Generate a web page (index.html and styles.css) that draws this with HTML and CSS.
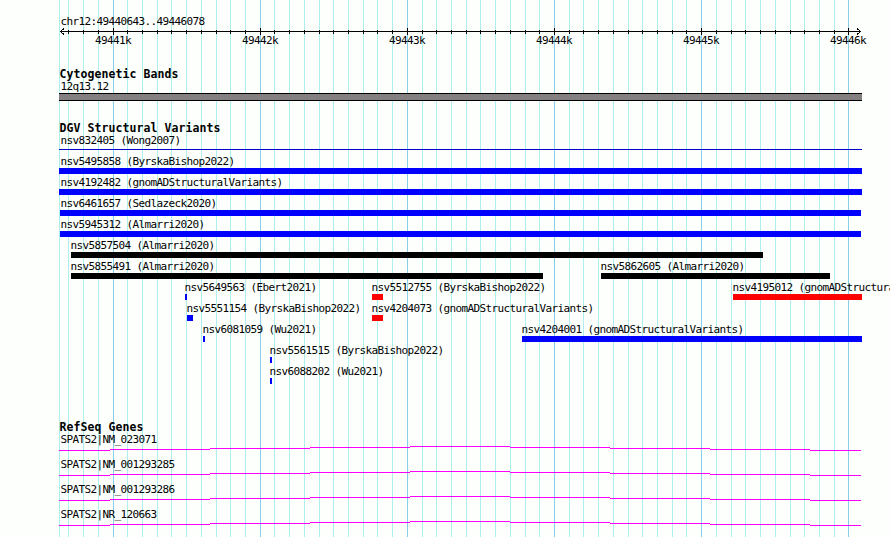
FILE: index.html
```html
<!DOCTYPE html>
<html lang="en">

<head>
    <meta charset="utf-8">
    <title>chr12:49440643..49446078</title>
    <link rel="stylesheet" href="styles.css">
</head>

<body>

    <div class="browser">
        <svg class="grid" width="890" height="537">
            <path class="minor" d="M59.5 0v537M68.5 0v537M83.5 0v537M98.5 0v537M127.5 0v537M142.5 0v537M157.5 0v537M171.5 0v537M186.5 0v537M201.5 0v537M216.5 0v537M230.5 0v537M245.5 0v537M274.5 0v537M289.5 0v537M304.5 0v537M319.5 0v537M333.5 0v537M348.5 0v537M363.5 0v537M377.5 0v537M392.5 0v537M422.5 0v537M436.5 0v537M451.5 0v537M466.5 0v537M480.5 0v537M495.5 0v537M510.5 0v537M525.5 0v537M539.5 0v537M569.5 0v537M583.5 0v537M598.5 0v537M613.5 0v537M628.5 0v537M642.5 0v537M657.5 0v537M672.5 0v537M686.5 0v537M716.5 0v537M731.5 0v537M745.5 0v537M760.5 0v537M775.5 0v537M790.5 0v537M804.5 0v537M819.5 0v537M834.5 0v537" />
            <path class="major" d="M113.5 0v537M260.5 0v537M407.5 0v537M554.5 0v537M701.5 0v537M848.5 0v537" />
        </svg>

        <div class="track scale">
            <div class="label">chr12:49440643..49446078</div>
            <svg class="ruler" width="890" height="20">
                <path d="M60 3.5h801M68.5 2v4M83.5 2v4M98.5 2v4M127.5 2v4M142.5 2v4M157.5 2v4M171.5 2v4M186.5 2v4M201.5 2v4M216.5 2v4M230.5 2v4M245.5 2v4M274.5 2v4M289.5 2v4M304.5 2v4M319.5 2v4M333.5 2v4M348.5 2v4M363.5 2v4M377.5 2v4M392.5 2v4M422.5 2v4M436.5 2v4M451.5 2v4M466.5 2v4M480.5 2v4M495.5 2v4M510.5 2v4M525.5 2v4M539.5 2v4M569.5 2v4M583.5 2v4M598.5 2v4M613.5 2v4M628.5 2v4M642.5 2v4M657.5 2v4M672.5 2v4M686.5 2v4M716.5 2v4M731.5 2v4M745.5 2v4M760.5 2v4M775.5 2v4M790.5 2v4M804.5 2v4M819.5 2v4M834.5 2v4" />
                <path d="M113.5 0v7M260.5 0v7M407.5 0v7M554.5 0v7M701.5 0v7M848.5 0v7" />
                <path d="M64 .5L60.5 3.5L64 6.5M857 .5L860.5 3.5L857 6.5" />
                <text x="95" y="16">49441k</text>
                <text x="242" y="16">49442k</text>
                <text x="389" y="16">49443k</text>
                <text x="536" y="16">49444k</text>
                <text x="683" y="16">49445k</text>
                <text x="830" y="16">49446k</text>
            </svg>
        </div>

        <div class="track cyto">
            <h2>Cytogenetic Bands</h2>
            <div class="label">12q13.12</div>
            <div class="band"></div>
        </div>

        <div class="track variants">
            <h2>DGV Structural Variants</h2>
            <div class="row">
                <div class="variant thin edge" style="--gap:59px;--len:803px"><span>nsv832405 (Wong2007)</span></div>
            </div>
            <div class="row">
                <div class="variant gain edge" style="--gap:59px;--len:803px"><span>nsv5495858 (ByrskaBishop2022)</span></div>
            </div>
            <div class="row">
                <div class="variant gain edge" style="--gap:59px;--len:803px"><span>nsv4192482 (gnomADStructuralVariants)</span></div>
            </div>
            <div class="row">
                <div class="variant gain inner" style="--gap:60px;--len:801px"><span>nsv6461657 (Sedlazeck2020)</span></div>
            </div>
            <div class="row">
                <div class="variant gain inner" style="--gap:60px;--len:801px"><span>nsv5945312 (Almarri2020)</span></div>
            </div>
            <div class="row">
                <div class="variant other" style="--gap:71px;--len:692px"><span>nsv5857504 (Almarri2020)</span></div>
            </div>
            <div class="row">
                <div class="variant other" style="--gap:71px;--len:472px"><span>nsv5855491 (Almarri2020)</span></div>
                <div class="variant other" style="--gap:58px;--len:229px"><span>nsv5862605 (Almarri2020)</span></div>
            </div>
            <div class="row">
                <div class="variant gain" style="--gap:185px;--len:2px"><span>nsv5649563 (Ebert2021)</span></div>
                <div class="variant loss" style="--gap:185px;--len:11px"><span>nsv5512755 (ByrskaBishop2022)</span></div>
                <div class="variant loss" style="--gap:350px;--len:129px"><span>nsv4195012 (gnomADStructuralVariants)</span></div>
            </div>
            <div class="row">
                <div class="variant gain" style="--gap:187px;--len:6px"><span>nsv5551154 (ByrskaBishop2022)</span></div>
                <div class="variant loss" style="--gap:179px;--len:11px"><span>nsv4204073 (gnomADStructuralVariants)</span></div>
            </div>
            <div class="row">
                <div class="variant gain" style="--gap:203px;--len:2px"><span>nsv6081059 (Wu2021)</span></div>
                <div class="variant gain" style="--gap:317px;--len:340px"><span>nsv4204001 (gnomADStructuralVariants)</span></div>
            </div>
            <div class="row">
                <div class="variant gain" style="--gap:270px;--len:2px"><span>nsv5561515 (ByrskaBishop2022)</span></div>
            </div>
            <div class="row">
                <div class="variant gain" style="--gap:270px;--len:2px"><span>nsv6088202 (Wu2021)</span></div>
            </div>
        </div>

        <div class="track genes">
            <h2>RefSeq Genes</h2>
            <div class="gene">
                <div class="label">SPATS2|NM_023071</div>
                <svg width="890" height="5">
                    <path id="intron" d="M59 4.5h51M110 3.5h100M210 2.5h100M310 1.5h100M410 .5h100M510 1.5h100M610 2.5h100M710 3.5h100M810 4.5h51" />
                </svg>
            </div>
            <div class="gene">
                <div class="label">SPATS2|NM_001293285</div>
                <svg width="890" height="5"><use href="#intron" /></svg>
            </div>
            <div class="gene">
                <div class="label">SPATS2|NM_001293286</div>
                <svg width="890" height="5"><use href="#intron" /></svg>
            </div>
            <div class="gene">
                <div class="label">SPATS2|NR_120663</div>
                <svg width="890" height="5"><use href="#intron" /></svg>
            </div>
        </div>
    </div>

</body>

</html>
```
FILE: styles.css
```css
body {
    margin: 0;
    background-color: #fdfffc;
    color: #000;
    font-family: "DejaVu Sans Mono", monospace;
    font-size: 11px;
    line-height: 12px;
    letter-spacing: -0.622px;
}

.browser {
    position: relative;
    width: 890px;
    height: 537px;
    overflow: hidden;
}

svg {
    display: block;
    shape-rendering: crispEdges;
}

/* grid lines run behind every track */
.grid {
    position: absolute;
    top: 0;
    left: 0;
}

.grid .minor {
    stroke: #afeeee;
}

.grid .major {
    stroke: #87ceeb;
}

.track {
    position: relative;
}

h2 {
    height: 12px;
    margin: 0 0 0 59.5px;
    font-size: 11.5px;
    font-weight: bold;
    line-height: 10px;
    letter-spacing: 0.077px;
}

.label {
    height: 12px;
    padding-left: 60.5px;
    white-space: nowrap;
}

.scale {
    padding-top: 16px;
    height: 53px;
}

.ruler path {
    fill: none;
    stroke: #000;
}

.cyto {
    height: 54px;
}

.band {
    box-sizing: border-box;
    width: 803px;
    height: 8px;
    margin-left: 59px;
    background-color: #848082;
    border: solid #000;
    border-width: 1px 0;
}

.variants {
    height: 299px;
}

.row {
    display: flex;
    height: 21px;
}

.variant {
    flex: none;
    width: var(--len);
    margin-left: var(--gap);
    white-space: nowrap;
}

.variant span {
    display: block;
    height: 12px;
    margin-left: -0.5px;
}

.variant.edge span {
    margin-left: 1.5px;
}

.variant.inner span {
    margin-left: 0.5px;
}

.variant::after {
    content: "";
    display: block;
    height: 6px;
    background-color: #00f;
}

.variant.other::after {
    background-color: #000;
}

.variant.loss::after {
    background-color: #f00;
}

.variant.thin::after {
    height: 1px;
    margin-top: 2px;
    background-color: #0000c8;
}

.gene {
    height: 25px;
}

.gene svg {
    fill: none;
    stroke: #f0f;
}
```
